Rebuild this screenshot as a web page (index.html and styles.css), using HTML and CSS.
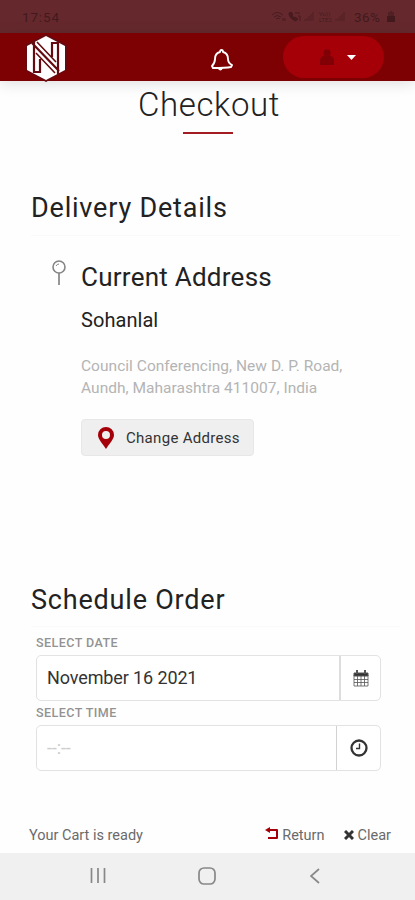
FILE: index.html
```html
<!DOCTYPE html>
<html lang="en">
<head>
<meta charset="utf-8">
<title>Checkout</title>
<link rel="stylesheet" href="styles.css">
</head>
<body>
<div class="status">
  <span class="clock">17:54</span>
  <div class="status-right">
    <svg class="signals" width="76" height="14" viewBox="0 0 76 14" fill="none" stroke="currentColor">
      <path d="M1 5Q6 0 12 5M3 7Q6 4 10 7M5 9Q7 7 9 9M12 8v3M14 8v3" />
      <path d="M18 3c0 4 3 7 7 8l2-2-3-2-1 1-2-3 1-1-2-2z" fill="currentColor"/><path d="M24 3h5M27 6h2v5"/>
      <path d="M34 11v-2M36 11V8M38 11V6M40 11V4M42 11V2" opacity=".7"/>
      <path d="M65 11v-2M67 11V8M69 11V6M71 11V4M73 11V2" opacity=".7"/>
      <text x="48" y="6" class="volte">Vo))</text><text x="48" y="12" class="volte">LTE2</text>
    </svg>
    <span class="percent">36%</span>
    <svg class="battery" width="8" height="12" viewBox="0 0 8 12" fill="currentColor"><path d="M3 0h2v1h2v4H1V1h2z" opacity=".55"/><path d="M0 5h8v6H0z"/></svg>
  </div>
</div>
<header class="navbar">
  <svg class="logo" width="44" height="50" viewBox="0 0 44 50">
    <path d="M22 1 43 12V37L22 49 1 37V12Z" fill="#650a10"/>
    <path d="M22 3 41 13V37L22 47 3 37V13Z" fill="#fff"/>
    <path d="M8 10 35 38M10 9V39h6V26M34 41V10h-6V24" fill="none" stroke="#650a10" stroke-width="2.200"/>
    <path d="M12 20 31 40M13 9 32 29" fill="none" stroke="#650a10" stroke-width="1.600"/>
  </svg>
  <svg class="bell" width="22" height="22" viewBox="0 0 22 22" fill="none" stroke="#fff" stroke-width="1.900" stroke-linejoin="round"><path d="M9 3q0-2 1.500-2T12 3c4 1 5 4 5 7 0 3 2 5 4 6l-1 2c-5 1-13 1-18 1l-1-2c2-2 3-4 3-7 0-4 1-6 5-7z"/><path d="M7.500 19q2 3 3.500 0"/></svg>
  <div class="account">
    <svg class="person" width="14" height="16" viewBox="0 0 14 16" fill="#800006"><circle cx="7" cy="4" r="3.700"/><path d="M3 7h8q3 1 3 5v4H0v-4q0-4 3-5z"/></svg>
    <svg class="caret" width="9" height="5" viewBox="0 0 9 5" fill="#fff"><path d="M0 0h9L4.500 5z"/></svg>
  </div>
</header>
<main>
  <h1>Checkout</h1>
  <section class="delivery">
    <h2>Delivery Details</h2>
    <div class="address">
      <svg class="pin" width="16" height="26" viewBox="0 0 16 26" fill="none" stroke="#858585"><circle cx="8" cy="7" r="6" stroke-width="1.600"/><path d="M8 13v12" stroke-width="1.700"/><path d="M5 6q1-2 3-2"/></svg>
      <div class="address-body">
        <h3>Current Address</h3>
        <div class="name">Sohanlal</div>
        <p><span class="line-one">Council Conferencing, New D. P. Road,</span><br><span class="line-two">Aundh, Maharashtra 411007, India</span></p>
        <button class="change"><svg width="16" height="22" viewBox="0 0 16 22"><path d="M8 0a8 8 0 0 0-8 8c0 4 4 8 8 14 4-6 8-10 8-14a8 8 0 0 0-8-8zm0 4a4 4 0 1 1 0 8 4 4 0 0 1 0-8z" fill="#a50009" fill-rule="evenodd"/></svg><span>Change Address</span></button>
      </div>
    </div>
  </section>
  <section class="schedule">
    <h2>Schedule Order</h2>
    <div class="fields">
      <label>SELECT DATE</label>
      <div class="field"><span class="value">November 16 2021</span><span class="addon"><svg width="16" height="17" viewBox="0 0 16 17" fill="none" stroke="#555"><path d="M1 3h14v3H1z" fill="#333"/><path d="M4 0v4M12 0v4" stroke-width="2"/><path d="M1 5v11h14V5M1 9.500h14M1 12.500h14M4.500 6v10M8 6v10M11.500 6v10" stroke-width=".8"/></svg></span></div>
      <label>SELECT TIME</label>
      <div class="field time"><span class="value">--:--</span><span class="addon"><svg width="18" height="18" viewBox="0 0 18 18" fill="none" stroke="#333"><circle cx="9" cy="9" r="7.500" stroke-width="2.300"/><path d="M9.500 4.500v5H6" stroke-width="1.400"/></svg></span></div>
    </div>
  </section>
</main>
<footer class="cart">
  <span class="ready">Your Cart is ready</span>
  <span class="return"><svg width="14" height="13" viewBox="0 0 14 13"><path d="M3 3h9v8H3" fill="none" stroke="#a50009" stroke-width="2" stroke-linejoin="round"/><path d="M0 3 5 0v6z" fill="#a50009"/></svg><span>Return</span></span>
  <span class="clear"><svg width="10" height="10" viewBox="0 0 10 10" stroke="#333" stroke-width="3"><path d="m1 1 8 8M9 1 1 9"/></svg><span>Clear</span></span>
</footer>
<nav class="system">
  <svg width="16" height="16" viewBox="0 0 16 16" stroke="#888" stroke-width="1.700"><path d="M1.500 0v15M8 0v15M14.500 0v15"/></svg>
  <svg width="18" height="18" viewBox="0 0 18 18" fill="none" stroke="#888" stroke-width="1.700"><rect x="1" y="1" width="16" height="16" rx="5"/></svg>
  <svg width="10" height="16" viewBox="0 0 10 16" fill="none" stroke="#888" stroke-width="1.700"><path d="M9 1 1 8l8 7"/></svg>
</nav>
</body>
</html>
```
FILE: styles.css
```css
* { box-sizing: border-box; }
body { margin: 0; width: 415px; height: 900px; display: flex; flex-direction: column; background: #fefefe; font-family: Roboto, sans-serif; color: #222; overflow: hidden; }
svg { display: block; flex: none; }
h1, h2, h3, p { margin: 0; font-weight: 400; }
span { white-space: nowrap; }
.status { height: 33px; flex: none; background: #65292d; color: #42191d; display: flex; align-items: center; justify-content: space-between; padding: 0 20px 0 22px; font-size: 13.500px; }
.clock { letter-spacing: .85px; }
.status-right { display: flex; align-items: center; }
.signals { opacity: .85; }
.percent { margin-left: 7px; width: 30px; letter-spacing: .4px; }
.battery { margin-left: 3px; }
.volte { font-size: 6px; fill: currentColor; stroke: none; }
.navbar { height: 48px; flex: none; background: #7d0003; display: flex; align-items: center; padding-left: 24px; box-shadow: 0 2px 14px #0002; }
.logo { margin-top: 1px; }
.bell { margin-left: 143px; margin-top: 6px; }
.account { margin-left: 50px; width: 101px; height: 42px; border-radius: 21px; background: #a50008; display: flex; align-items: center; padding-left: 37px; }
.caret { margin-left: 13px; }
main { flex: 1; min-height: 0; }
h1 { width: 142px; margin: 2px 0 0 138px; height: 51px; line-height: 44px; font-size: 33px; font-weight: 300; letter-spacing: .6px; text-align: center; display: flex; flex-direction: column; align-items: center; white-space: nowrap; }
h1::after { content: ""; width: 50px; height: 2px; flex: none; background: #a31c22; margin: 5px 2px 0 0; }
h2 { font-size: 27px; line-height: 38px; letter-spacing: .8px; white-space: nowrap; }
.delivery { margin: 55px 15px 0 31px; height: 392px; }
.delivery h2 { height: 47px; border-bottom: 1px solid #f9f9f9; }
.address { display: flex; padding: 24px 0 0 20px; }
.address-body { margin-left: 14px; }
h3 { font-size: 26px; line-height: 34px; letter-spacing: .25px; white-space: nowrap; }
.name { margin-top: 12px; font-size: 20px; line-height: 28px; letter-spacing: .05px; }
p { margin-top: 22px; font-size: 15.500px; line-height: 21.500px; color: #b4b4b4; }
.line-one, .line-two { letter-spacing: .03px; }
.change { margin: 20px 0 0; border: 1px solid #e7e7e7; border-radius: 4px; width: 173px; height: 37px; background: #efefef; display: flex; align-items: center; padding: 0 0 0 16px; font: 15px Roboto, sans-serif; color: #333; }
.change span { margin-left: 12px; letter-spacing: .3px; }
.schedule { margin: 0 15px 0 31px; }
.schedule h2 { height: 46px; border-bottom: 1px solid #fafafa; }
.fields { width: 345px; margin-left: 5px; }
label { display: block; font-size: 12.500px; line-height: 14px; height: 28px; padding-top: 9px; color: #929292; font-weight: 500; letter-spacing: .45px; }
.field { height: 46px; border: 1px solid #e2e2e2; border-radius: 5px; display: flex; background: #fff; }
.field + label { height: 24px; padding-top: 5px; }
.value { flex: 1; display: flex; align-items: center; padding-left: 10px; padding-bottom: 1px; font-size: 18px; letter-spacing: -.12px; color: #333; }
.addon { width: 41px; border-left: 2px solid #ddd; display: flex; align-items: center; justify-content: center; }
.time .value { color: #ccc; }
.time .addon { width: 44px; border-left: 1px solid #d2d2d2; padding-bottom: 1px; }
.cart { height: 36px; flex: none; display: flex; align-items: center; padding: 0 24px 0 29px; font-size: 14.500px; color: #6a6a6a; }
.return { margin-left: auto; display: flex; align-items: center; gap: 3px; }
.return svg { margin-top: -3px; }
.clear { margin-left: 19px; display: flex; align-items: center; gap: 4px; }
.system { height: 47px; flex: none; background: #f0f0f0; display: flex; align-items: center; justify-content: space-between; padding: 0 95px 2px 90px; }
.system svg:nth-child(2) { margin-right: 3px; }
```
